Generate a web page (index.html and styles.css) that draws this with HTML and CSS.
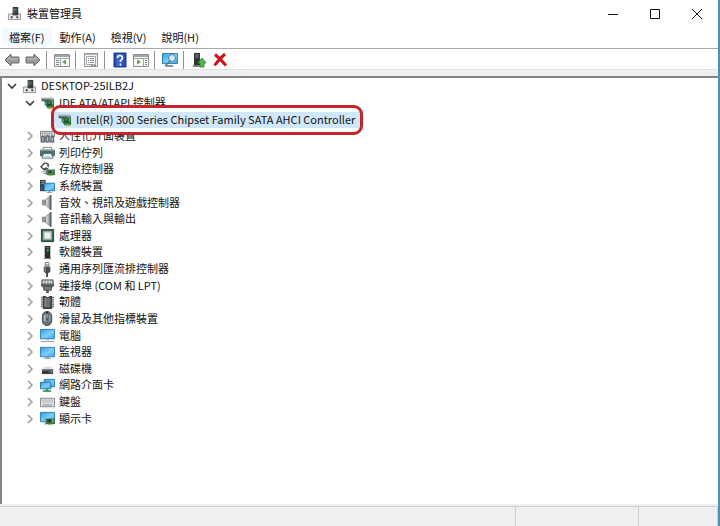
FILE: index.html
```html
<!DOCTYPE html>
<html lang="zh-Hant">
<head>
<meta charset="utf-8">
<title>裝置管理員</title>
<link rel="stylesheet" href="styles.css">
</head>
<body>
<svg class="sprite" aria-hidden="true">
  <defs>
    <linearGradient id="sky" x1="0" y1="0" x2="1" y2="1"><stop offset="0" stop-color="#2e9fe6"/><stop offset=".55" stop-color="#7cd0fa"/><stop offset="1" stop-color="#38a4e8"/></linearGradient>
    <linearGradient id="steel" x1="0" y1="0" x2="1" y2="0"><stop offset="0" stop-color="#7d8285"/><stop offset=".6" stop-color="#d5d8da"/><stop offset="1" stop-color="#85898c"/></linearGradient>
    <linearGradient id="help" x1="0" y1="0" x2="1" y2="0"><stop offset="0" stop-color="#15358e"/><stop offset=".25" stop-color="#3d67cf"/><stop offset="1" stop-color="#2448ae"/></linearGradient>
  </defs>
  <symbol id="host" viewBox="0 0 16 16"><path d="M6 1h6v9H6z" fill="#3b3e40"/><path d="M7 2h1v7H7z" fill="#83888b"/><path d="M9 3h1v2H9z" fill="#4caf61"/><path d="M1.500 8.500h13v6h-13z" fill="#e7e9ea" stroke="#8c9194"/><path d="M6 7h6v3H6z" fill="#3b3e40"/><path d="M4 11h2v2H4zM10 11h2v2h-2z" fill="#3a3d3f"/></symbol>
  <symbol id="card" viewBox="0 0 16 16"><path d="M1 3h13l1 2v2H2z" fill="#858a8c"/><path d="M1 3h13v1H1z" fill="#bfc3c5"/><path d="M2 5h9v1H2z" fill="#3c4042"/><path d="M5 6h10v8H8l-2-3H5z" fill="#267044"/><path d="M8 8h4v3H8z" fill="#163d27"/><path d="M9 8h2v1H9zM6 8h1v2H6zM13 7h1v3h-1z" fill="#83cf8f"/><path d="M9 13h5v2H9z" fill="#b6a543"/></symbol>
  <symbol id="hid" viewBox="0 0 16 16"><path d="M.5 2.500h15v6H.5z" fill="#d8dbdd" stroke="#787d81"/><path d="M2 4.500h12M2 6.500h12" stroke="#5e6468" stroke-dasharray="1 1"/><path d="M1 14V9q2-3 4 0v5zM6 14V8q2-2 4 0v6zM11 14l1-6 2-1 1 7z" fill="#7b858d" stroke="#42484c" stroke-width=".7"/><path d="M3 9v4M8 9v4M13 9v4" stroke="#b4c2cc"/></symbol>
  <symbol id="printer" viewBox="0 0 16 16"><path d="M3.500 2.500h9v3h-9z" fill="#fff" stroke="#7c8386"/><path d="M0 5h16v7H0z" fill="#5c686c"/><path d="M0 5h16v1H0z" fill="#a1acb0"/><path d="M3 7h10v2H3z" fill="#1f777c"/><path d="M4 9h8l2 5H2z" fill="#f1f4f5" stroke="#52757a"/><path d="M5 12h6" stroke="#a8cacc"/></symbol>
  <symbol id="storage" viewBox="0 0 16 16"><path d="M9 2L5 1 1 5l3 3 5-1" fill="none" stroke="#454b4e" stroke-width="1.5"/><path d="M7 3l3-1-1 4zM3 8l4-3v4z" fill="#454b4e"/><path d="M3 9h11v4H4z" fill="#888f91"/><path d="M7 8h9v6H7z" fill="#408258"/><path d="M9 9h3v3H9z" fill="#254c34"/><path d="M1 10h5v2H1z" fill="#d5d8d9"/><path d="M9 14h5v1H9z" fill="#c5ae42"/></symbol>
  <symbol id="system" viewBox="0 0 16 16"><path d="M0 1h6v12H0z" fill="#39454c"/><path d="M1 2h4v1H1zM1 4h4v1H1z" fill="#8da0ab"/><path d="M1 10h1v1H1z" fill="#62d775"/><path d="M4.500 4.500h11v8h-11z" fill="url(#sky)" stroke="#2876ad"/><path d="M9 13h2v1h2v1H7v-1h2z" fill="#8b989f"/></symbol>
  <symbol id="speaker" viewBox="0 0 16 16"><path d="M2.500 5.500h3L10.500 1v14l-5-4.500h-3z" fill="url(#steel)" stroke="#858a8d"/><path d="M5.500 5.500v5" stroke="#606467"/><path d="M11.500 0v16" stroke="#515659" stroke-width="1.5"/></symbol>
  <symbol id="cpu" viewBox="0 0 16 16"><path d="M1.500 1.500h13v13h-13z" fill="#2f6045" stroke="#214834"/><path d="M3 3h10v10H3z" fill="#7ca189"/><path d="M4.500 4.500h7v7h-7z" fill="#eef0ed" stroke="#c4cdc7"/></symbol>
  <symbol id="software" viewBox="0 0 16 16"><path d="M5 1h6v13H5z" fill="#292d2f"/><path d="M6 2h4v1H6z" fill="#737a7e"/><path d="M7 4h2v4H7z" fill="#2e6a42"/><path d="M8 4h1v2H8z" fill="#5cdf79"/><path d="M4 14h8v1H4z" fill="#6d7376"/></symbol>
  <symbol id="usb" viewBox="0 0 16 16"><path d="M5.500.5h4v4h-4z" fill="#fff" stroke="#777c7f"/><path d="M6.500 2v2M8.500 2v2" stroke="#686d70"/><path d="M4 5h7v5l-2 2H6l-2-2z" fill="#484d50"/><path d="M5 6h1v4H5z" fill="#a3a8ab"/><path d="M7.500 11v5" stroke="#42474a" stroke-width="2"/></symbol>
  <symbol id="port" viewBox="0 0 16 16"><path d="M2 2h12v6l-2 3H4L2 8z" fill="#a0a5a8" stroke="#565b5e"/><path d="M4 3v3M7 3v3M10 3v3M12 3v3" stroke="#eceeef"/><path d="M1 6h14v3H1z" fill="#5b6063"/><path d="M4 9h8v4H4z" fill="#777c7f" stroke="#474b4e"/><path d="M8 13v3" stroke="#4d5255" stroke-width="3"/></symbol>
  <symbol id="firmware" viewBox="0 0 16 16"><path d="M3 1h3l1 1h2l1-1h3v14H3z" fill="#3c4042"/><path d="M1 2.500h2M1 4.500h2M1 6.500h2M1 8.500h2M1 10.500h2M1 12.500h2M13 2.500h2M13 4.500h2M13 6.500h2M13 8.500h2M13 10.500h2M13 12.500h2" stroke="#45494b"/><path d="M5 3h6v10H5z" fill="#6b7174"/><path d="M5 3h1v10H5z" fill="#9ba1a4"/></symbol>
  <symbol id="mouse" viewBox="0 0 16 16"><rect x="2.500" y=".5" width="10" height="15" rx="5" fill="#65717c" stroke="#3f464c"/><path d="M4 5l2-2v9l-2-2z" fill="#aebac3"/><path d="M7.500 1v8" stroke="#303538" stroke-width="2"/><path d="M7 3h1v5H7z" fill="#dae9f3"/><path d="M10.500 4v7" stroke="#a3b1bd"/></symbol>
  <symbol id="computer" viewBox="0 0 16 16"><path d="M.5 1.500h15v10H.5z" fill="url(#sky)" stroke="#307fb4"/><path d="M6 12h4v1H6z" fill="#a3b0b7"/><path d="M1 14.500h14" stroke="#89949a"/></symbol>
  <symbol id="monitor" viewBox="0 0 16 16"><path d="M.5 2.500h15v10H.5z" fill="url(#sky)" stroke="#307fb4"/><path d="M6 13h4v1h2v1H4v-1h2z" fill="#94a2aa"/></symbol>
  <symbol id="disk" viewBox="0 0 16 16"><path d="M4 6h8l2 3H2z" fill="#dcdedf"/><path d="M2 9h12v5H2z" fill="#444849"/><path d="M2 9h12v1H2z" fill="#777c7e"/><path d="M3 12h6" stroke="#1f2223"/><path d="M11 11h2v1h-2z" fill="#6ee56f"/></symbol>
  <symbol id="network" viewBox="0 0 16 16"><path d="M4.500 1.500h11v8h-11z" fill="url(#sky)" stroke="#2d79ad"/><path d="M.5 4.500h11v7H.5z" fill="url(#sky)" stroke="#276e9f"/><path d="M7 12v2M3 14h9" stroke="#40ac62" stroke-width="2"/><path d="M6 12h3v3H6z" fill="#3a9c58"/></symbol>
  <symbol id="keyboard" viewBox="0 0 16 16"><path d="M.5 3.500h15v9H.5z" fill="#e0e2e3" stroke="#7e8386"/><path d="M2 5.500h12M3 7.500h12" stroke="#858b8e" stroke-dasharray="1 1"/><path d="M3 10.500h10" stroke="#8d9295"/></symbol>
  <symbol id="display" viewBox="0 0 16 16"><path d="M.5 1.500h15v10H.5z" fill="url(#sky)" stroke="#307fb4"/><path d="M6 8h10v6H6z" fill="#3e7953"/><path d="M8 9h4v3H8z" fill="#203f2d"/><path d="M13 9h1v3h-1z" fill="#a0c46c"/><path d="M8 14h5v1H8z" fill="#c9a945"/><path d="M5.500 8v7" stroke="#8a9396"/></symbol>
  <symbol id="closed" viewBox="0 0 10 10"><path d="M3 1l4 4-4 4" fill="none" stroke="#9c9c9c" stroke-width="1.5"/></symbol>
  <symbol id="open" viewBox="0 0 10 10"><path d="M1 3l4 4 4-4" fill="none" stroke="#3c3c3c" stroke-width="1.6"/></symbol>
</svg>

<div class="window">
  <header class="titlebar">
    <svg class="icon"><use href="#host"/></svg>
    <h1 class="title label">裝置管理員</h1>
    <div class="captions">
      <button class="caption" aria-label="最小化"><svg viewBox="0 0 12 12"><path d="M1 6.500h10"/></svg></button>
      <button class="caption" aria-label="最大化"><svg viewBox="0 0 12 12"><path d="M1.500 1.500h9v9h-9z"/></svg></button>
      <button class="caption" aria-label="關閉"><svg viewBox="0 0 12 12"><path d="M1 1l10 10M11 1L1 11"/></svg></button>
    </div>
  </header>

  <nav class="menubar">
    <button class="menu active">檔案(F)</button>
    <button class="menu">動作(A)</button>
    <button class="menu">檢視(V)</button>
    <button class="menu">說明(H)</button>
  </nav>

  <div class="toolbar" role="toolbar">
    <button class="tool" aria-label="上一頁"><svg viewBox="0 0 16 16"><path d="M1 8l6-6v3h8v6H7v3z" fill="#9a9a9a" stroke="#696969"/><path d="M3 8l3-3v2h8" fill="none" stroke="#bdbdbd"/></svg></button>
    <button class="tool" aria-label="下一頁"><svg viewBox="0 0 16 16"><path d="M15 8L9 2v3H1v6h8v3z" fill="#9a9a9a" stroke="#696969"/><path d="M2 7h8V5l3 3" fill="none" stroke="#bdbdbd"/></svg></button>
    <span class="separator"></span>
    <button class="tool" aria-label="顯示主控台樹"><svg viewBox="0 0 16 16"><path d="M.5 2.500h15v12H.5z" fill="#f8f9f9" stroke="#8a9093"/><path d="M1 3h14v2H1z" fill="#9ca6ae"/><path d="M1 6.500h14M6.500 7v7" stroke="#a2a9ad"/><path d="M2 8.500h3M2 10.500h3M2 12.500h3" stroke="#77828c"/><path d="M12 7.500v5L8 10z" fill="#57a940"/></svg></button>
    <span class="separator"></span>
    <button class="tool" aria-label="內容"><svg viewBox="0 0 16 16"><path d="M1.500 1.500h13v13h-13z" fill="#f2f3f4" stroke="#92979a"/><path d="M3.500 4.500h9v8h-9z" fill="#fff" stroke="#a1a7ab"/><path d="M2 2.500h12" stroke="#b2b9bd"/><path d="M5 6.500h1M7 6.500h4M5 8.500h1M7 8.500h4M5 10.500h1M7 10.500h4" stroke="#8296a5"/><path d="M8 13.500h2M11 13.500h2" stroke="#7c8588"/></svg></button>
    <span class="separator"></span>
    <button class="tool" aria-label="說明"><svg viewBox="0 0 16 16"><path d="M2 1h12v14H2z" fill="url(#help)" stroke="#193987"/><path d="M5.500 6Q5.500 3.500 8 3.500T10.500 6Q10.500 7.500 8.500 8.500V10M8.500 11.500v2" fill="none" stroke="#fff" stroke-width="1.7"/></svg></button>
    <button class="tool" aria-label="顯示動作窗格"><svg viewBox="0 0 16 16"><path d="M.5 2.500h15v12H.5z" fill="#f8f9f9" stroke="#8a9093"/><path d="M1 3h14v2H1z" fill="#9ca6ae"/><path d="M1 6.500h14M10.500 7v7" stroke="#a2a9ad"/><path d="M12 8.500h2M12 10.500h2M12 12.500h2" stroke="#77828c"/><path d="M4 7.500v5L8 10z" fill="#57a940"/></svg></button>
    <span class="separator"></span>
    <button class="tool" aria-label="掃描硬體變更"><svg viewBox="0 0 16 16"><path d="M.5 1.500h15v10H.5z" fill="url(#sky)" stroke="#3981af"/><path d="M4 13h7v2H4z" fill="#86939b"/><circle cx="10" cy="6" r="3.500" fill="#c7ebfa" stroke="#597f98"/><path d="M8 9l-5 5" stroke="#557487" stroke-width="1.500"/></svg></button>
    <span class="separator"></span>
    <button class="tool" aria-label="更新驅動程式"><svg viewBox="0 0 16 16"><path d="M3 1h6v12H3z" fill="#333638"/><path d="M4 3h4M4 5h4" stroke="#7d8386"/><path d="M2 13h8v2H2z" fill="#777d80"/><path d="M11 6l4 5h-2v4H9v-4H7z" fill="#52b74d" stroke="#379039"/></svg></button>
    <button class="tool" aria-label="解除安裝裝置"><svg viewBox="0 0 16 16"><path d="M3 2.500q5 4 11 11M13 2Q7 7 2.500 13.500" fill="none" stroke="#cf1018" stroke-width="3"/></svg></button>
  </div>

  <main class="panel">
    <ul class="tree" role="tree">
      <li class="row root" role="treeitem" aria-level="1" aria-expanded="true"><button class="toggle" aria-label="收合"><svg><use href="#open"/></svg></button><svg class="icon"><use href="#host"/></svg><span class="label">DESKTOP-25ILB2J</span></li>
      <li class="row" role="treeitem" aria-level="2" aria-expanded="true"><button class="toggle" aria-label="收合"><svg><use href="#open"/></svg></button><svg class="icon"><use href="#card"/></svg><span class="label">IDE ATA/ATAPI 控制器</span></li>
      <li class="row leaf" role="treeitem" aria-level="3" aria-selected="true"><span class="selection"><svg class="icon"><use href="#card"/></svg><span class="label">Intel(R) 300 Series Chipset Family SATA AHCI Controller</span></span></li>
      <li class="row" role="treeitem" aria-level="2"><button class="toggle" aria-label="展開"><svg><use href="#closed"/></svg></button><svg class="icon"><use href="#hid"/></svg><span class="label">人性化介面裝置</span></li>
      <li class="row" role="treeitem" aria-level="2"><button class="toggle" aria-label="展開"><svg><use href="#closed"/></svg></button><svg class="icon"><use href="#printer"/></svg><span class="label">列印佇列</span></li>
      <li class="row" role="treeitem" aria-level="2"><button class="toggle" aria-label="展開"><svg><use href="#closed"/></svg></button><svg class="icon"><use href="#storage"/></svg><span class="label">存放控制器</span></li>
      <li class="row" role="treeitem" aria-level="2"><button class="toggle" aria-label="展開"><svg><use href="#closed"/></svg></button><svg class="icon"><use href="#system"/></svg><span class="label">系統裝置</span></li>
      <li class="row" role="treeitem" aria-level="2"><button class="toggle" aria-label="展開"><svg><use href="#closed"/></svg></button><svg class="icon"><use href="#speaker"/></svg><span class="label">音效、視訊及遊戲控制器</span></li>
      <li class="row" role="treeitem" aria-level="2"><button class="toggle" aria-label="展開"><svg><use href="#closed"/></svg></button><svg class="icon"><use href="#speaker"/></svg><span class="label">音訊輸入與輸出</span></li>
      <li class="row" role="treeitem" aria-level="2"><button class="toggle" aria-label="展開"><svg><use href="#closed"/></svg></button><svg class="icon"><use href="#cpu"/></svg><span class="label">處理器</span></li>
      <li class="row" role="treeitem" aria-level="2"><button class="toggle" aria-label="展開"><svg><use href="#closed"/></svg></button><svg class="icon"><use href="#software"/></svg><span class="label">軟體裝置</span></li>
      <li class="row" role="treeitem" aria-level="2"><button class="toggle" aria-label="展開"><svg><use href="#closed"/></svg></button><svg class="icon"><use href="#usb"/></svg><span class="label">通用序列匯流排控制器</span></li>
      <li class="row" role="treeitem" aria-level="2"><button class="toggle" aria-label="展開"><svg><use href="#closed"/></svg></button><svg class="icon"><use href="#port"/></svg><span class="label">連接埠 (COM 和 LPT)</span></li>
      <li class="row" role="treeitem" aria-level="2"><button class="toggle" aria-label="展開"><svg><use href="#closed"/></svg></button><svg class="icon"><use href="#firmware"/></svg><span class="label">韌體</span></li>
      <li class="row" role="treeitem" aria-level="2"><button class="toggle" aria-label="展開"><svg><use href="#closed"/></svg></button><svg class="icon"><use href="#mouse"/></svg><span class="label">滑鼠及其他指標裝置</span></li>
      <li class="row" role="treeitem" aria-level="2"><button class="toggle" aria-label="展開"><svg><use href="#closed"/></svg></button><svg class="icon"><use href="#computer"/></svg><span class="label">電腦</span></li>
      <li class="row" role="treeitem" aria-level="2"><button class="toggle" aria-label="展開"><svg><use href="#closed"/></svg></button><svg class="icon"><use href="#monitor"/></svg><span class="label">監視器</span></li>
      <li class="row" role="treeitem" aria-level="2"><button class="toggle" aria-label="展開"><svg><use href="#closed"/></svg></button><svg class="icon"><use href="#disk"/></svg><span class="label">磁碟機</span></li>
      <li class="row" role="treeitem" aria-level="2"><button class="toggle" aria-label="展開"><svg><use href="#closed"/></svg></button><svg class="icon"><use href="#network"/></svg><span class="label">網路介面卡</span></li>
      <li class="row" role="treeitem" aria-level="2"><button class="toggle" aria-label="展開"><svg><use href="#closed"/></svg></button><svg class="icon"><use href="#keyboard"/></svg><span class="label">鍵盤</span></li>
      <li class="row" role="treeitem" aria-level="2"><button class="toggle" aria-label="展開"><svg><use href="#closed"/></svg></button><svg class="icon"><use href="#display"/></svg><span class="label">顯示卡</span></li>
    </ul>
  </main>

  <footer class="statusbar"><span class="cell wide"></span><span class="cell mid"></span><span class="cell end"></span></footer>
</div>
</body>
</html>
```
FILE: styles.css
```css
* { box-sizing: border-box; }

body {
  margin: 0;
  color: #111;
  background: #fff;
  font: 11px/16px "Noto Sans CJK TC", sans-serif;
}

button {
  display: flex;
  align-items: center;
  justify-content: center;
  padding: 0;
  border: 0;
  background: none;
  color: inherit;
  font: inherit;
}

.sprite { position: absolute; width: 0; height: 0; }

.window {
  display: flex;
  flex-direction: column;
  min-height: 100vh;
  border-right: 2px solid #4795ae;
}

.icon { flex: none; width: 15px; height: 15px; }
.label { padding-bottom: 2px; line-height: 14px; }

.titlebar { display: flex; align-items: center; gap: 5px; height: 27px; padding-left: 7px; }
.title { flex: 1; margin: 0; font-size: 11px; font-weight: 400; }
.captions { display: flex; }
.caption { width: 42px; height: 26px; }
.caption svg { width: 12px; height: 12px; fill: none; stroke: #111; }

.menubar { display: flex; gap: 1px; height: 22px; padding: 1px 2px 3px; border-bottom: 1px solid #a8a8a8; }
.menu { padding: 0 7px; }
.menu.active { background: #f2f9ff; }

.toolbar { display: flex; align-items: center; height: 21px; padding: 2px 0 0 1px; border-bottom: 1px solid #e0e0e0; }
.tool { width: 21px; height: 18px; }
.tool svg { width: 16px; height: 16px; }
.separator { width: 1px; height: 18px; margin: 0 4px 0 3px; background: #929292; }

.panel {
  flex: 1;
  border: solid #858585;
  border-width: 2px 0 0 2px;
  margin-top: 6px;
  box-shadow: 0 -6px #efefef;
}

.tree {
  display: grid;
  grid-auto-rows: 1fr;
  min-height: 349px;
  margin: 0;
  padding: 0;
  list-style: none;
}
.row { display: flex; align-items: center; gap: 4px; padding-left: 22px; white-space: nowrap; }
.row.root { padding-left: 4px; }
.toggle { width: 11px; height: 15px; margin-right: 1px; }
.toggle svg { width: 10px; height: 10px; }

.row.leaf { position: relative; z-index: 1; padding-left: 55px; }
.selection { position: relative; display: flex; align-items: center; gap: 4px; padding-right: 4px; }

/* Rounded callout around the selected controller. */
.selection::before {
  content: "";
  position: absolute;
  z-index: -1;
  inset: -7px -4px -7px -6px;
  border: 3px solid #c4262e;
  border-radius: 9px;
  background: linear-gradient(#fff 4px, #d0e7fa 4px, #d0e7fa 20px, #fff 20px);
}

.statusbar { display: flex; height: 22px; padding-top: 1px; background: #efefef; border-top: 1px solid #efefef; }
.cell { border-top: 1px solid #cfcfcf; border-right: 1px solid #cfcfcf; }
.wide { flex: 1; }
.mid { width: 123px; }
.end { width: 79px; }
```
